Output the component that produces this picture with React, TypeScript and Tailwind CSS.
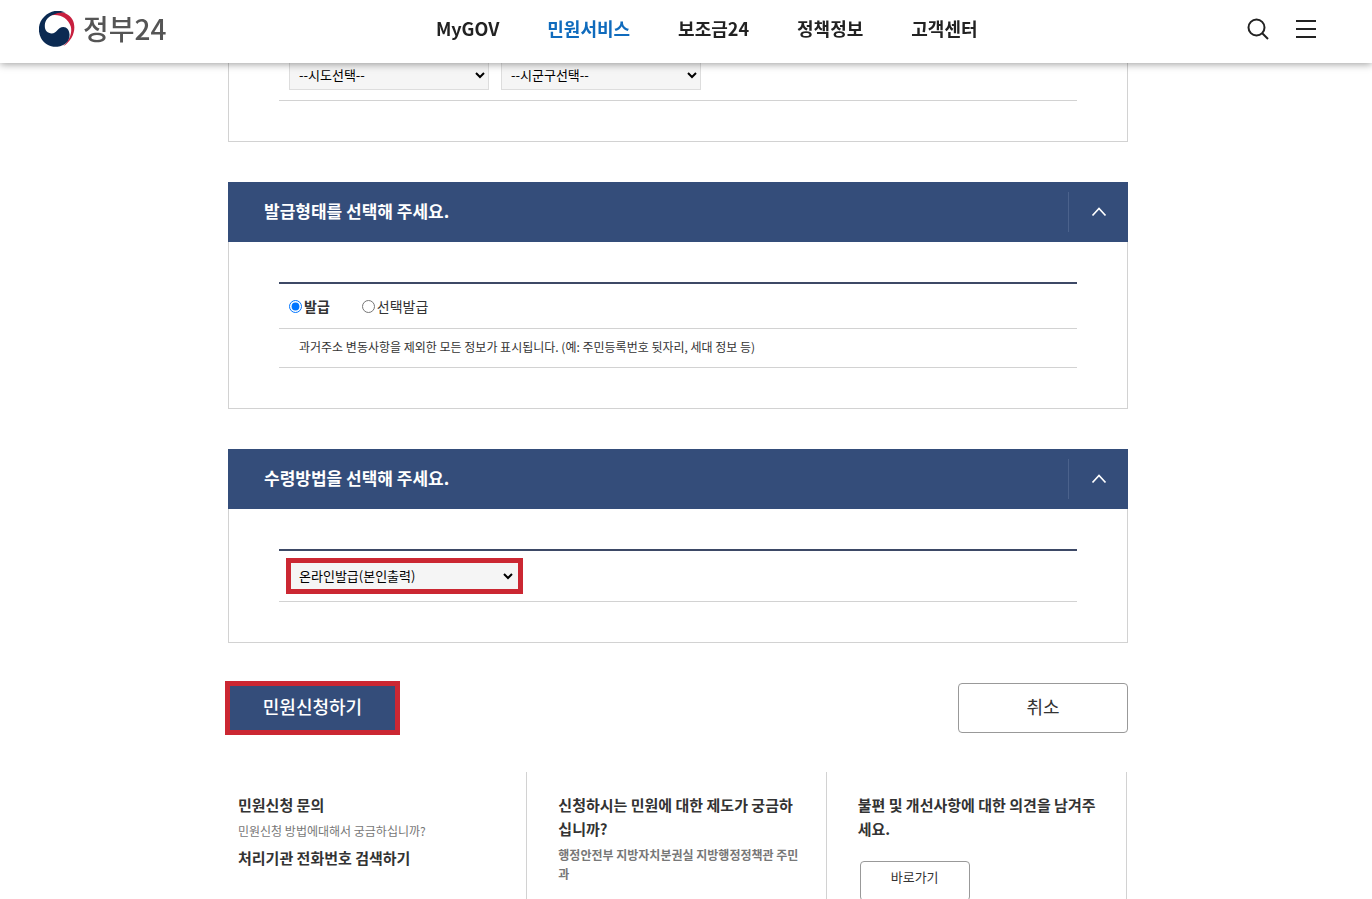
import { useState } from "react";
import type { ReactNode } from "react";

const NAV_ITEMS = ["MyGOV", "민원서비스", "보조금24", "정책정보", "고객센터"];
const ACTIVE_ITEM = "민원서비스";

function Logo() {
  return (
    <a href="#" className="flex items-center gap-2 pb-px text-[28px] leading-10 font-medium text-[#555]">
      <svg viewBox="8 8 111 111" className="size-9" aria-hidden="true">
        <path
          d="M34 24 C58 3 96 8 111 34 C125 60 114 98 82 117 C102 98 111 76 106 56 C97 26 66 13 34 24 Z"
          fill="#c8203f"
        />
        <path
          d="M24 26 C6 42 3 70 14 91 C24 110 44 120 65 118 C90 115 104 98 102 79 C101 66 94 57 83 57 C66 57 63 77 47 77 C35 77 26 69 26 56 C25 38 36 25 54 19 C64 14 76 11 90 14 C74 3 44 4 24 26 Z"
          fill="#0b2a52"
        />
      </svg>
      <span className="pb-[2px]">정부24</span>
    </a>
  );
}

function Header() {
  return (
    <header className="fixed inset-x-0 top-0 z-10 flex h-[63px] items-center justify-between bg-white pr-[55px] pb-[5px] pl-[39px] shadow-[0_1px_8px_rgba(0,0,0,0.4)]">
      <Logo />
      <nav className="flex gap-12 pb-[2px] text-lg font-bold">
        {NAV_ITEMS.map((item) => (
          <a key={item} href="#" className={item === ACTIVE_ITEM ? "text-[#0f6bbd]" : "text-[#222]"}>
            {item}
          </a>
        ))}
      </nav>
      <div className="flex items-center gap-[26px]">
        <button type="button" aria-label="검색">
          <svg viewBox="0 0 22 22" className="size-[22px]" fill="none" stroke="#222" strokeWidth="2">
            <circle cx="9.5" cy="9.5" r="8" />
            <path d="M15 15l6 6" />
          </svg>
        </button>
        <button type="button" aria-label="전체메뉴">
          <svg viewBox="0 0 22 20" className="h-5 w-[22px]" stroke="#222" strokeWidth="2">
            <path d="M1 2h20M1 10h20M1 18h20" />
          </svg>
        </button>
      </div>
    </header>
  );
}

function Section({ title, children }: { title: string; children: ReactNode }) {
  const [open, setOpen] = useState(true);

  return (
    <section className="mt-10">
      <div className="flex h-[60px] items-center justify-between bg-[#344d7a] pl-9">
        <h2 className="pb-[2px] text-[17px] font-bold text-white">{title}</h2>
        <button
          type="button"
          aria-label={title}
          aria-expanded={open}
          onClick={() => setOpen(!open)}
          className="flex h-10 w-[60px] items-center justify-center border-l border-[#4b628c]"
        >
          <svg viewBox="0 0 16 10" className="h-[10px] w-4" fill="none" stroke="#fff" strokeWidth="1.7">
            <path d={open ? "M1.5 8.5l6.5-7 6.5 7" : "M1.5 1.5l6.5 7 6.5-7"} />
          </svg>
        </button>
      </div>
      {open && (
        <div className="border border-t-0 border-[#d2d2d2] px-[50px] py-10">
          <div className="border-t-2 border-[#3d4966]">{children}</div>
        </div>
      )}
    </section>
  );
}

function RegionPanel() {
  const selectClass = "h-[30px] w-[200px] border border-[#ddd] bg-[#f5f5f5] px-[5px] pb-[2px] text-[13px] text-black";

  return (
    <div className="border border-t-0 border-[#d2d2d2] px-[50px] pt-[60px] pb-10">
      <div className="flex gap-3 border-b border-[#d2d2d2] px-[10px] pb-[10px]">
        <select aria-label="시도" className={selectClass}>
          <option>--시도선택--</option>
        </select>
        <select aria-label="시군구" className={selectClass}>
          <option>--시군구선택--</option>
        </select>
      </div>
    </div>
  );
}

function IssueType() {
  const [type, setType] = useState("발급");

  return (
    <>
      <div className="flex h-[45px] items-center gap-8 border-b border-[#d2d2d2] px-[10px] text-sm text-[#333]">
        {["발급", "선택발급"].map((value) => (
          <label key={value} className={value === type ? "flex items-center gap-[2px] font-bold" : "flex items-center gap-[2px]"}>
            <input
              type="radio"
              name="issueType"
              value={value}
              checked={value === type}
              onChange={() => setType(value)}
              className="size-[13px]"
            />
            {value}
          </label>
        ))}
      </div>
      <p className="h-[39px] border-b border-[#d2d2d2] px-5 text-xs leading-9 text-[#333]">
        과거주소 변동사항을 제외한 모든 정보가 표시됩니다. (예: 주민등록번호 뒷자리, 세대 정보 등)
      </p>
    </>
  );
}

function Inquiry() {
  const titleClass = "text-[15px] leading-6 font-bold text-[#333]";

  return (
    <div className="mt-[39px] mr-px grid grid-cols-3 divide-x divide-[#d2d2d2] border-r border-[#d2d2d2]">
      <div className="pt-[21px] pr-6 pb-10 pl-[10px]">
        <h3 className={titleClass}>민원신청 문의</h3>
        <p className="mt-1 text-xs leading-[19px] text-[#777]">민원신청 방법에대해서 궁금하십니까?</p>
        <a href="#" className={`mt-[6px] block ${titleClass}`}>
          처리기관 전화번호 검색하기
        </a>
      </div>
      <div className="pt-[21px] pr-6 pb-10 pl-[31px]">
        <h3 className={titleClass}>신청하시는 민원에 대한 제도가 궁금하십니까?</h3>
        <p className="mt-1 text-xs leading-[19px] font-bold text-[#777]">
          행정안전부 지방자치분권실 지방행정정책관 주민과
        </p>
      </div>
      <div className="pt-[21px] pr-6 pb-10 pl-[31px]">
        <h3 className={titleClass}>불편 및 개선사항에 대한 의견을 남겨주세요.</h3>
        <button
          type="button"
          className="mt-5 ml-[2px] h-10 w-[110px] rounded-sm border border-[#999] pb-2 text-[13px] text-[#333]"
        >
          바로가기
        </button>
      </div>
    </div>
  );
}

export default function App() {
  return (
    <div className="min-h-screen bg-white pr-4 font-['Noto_Sans_CJK_KR',sans-serif]">
      <Header />
      <main className="mx-auto max-w-[900px]">
        <RegionPanel />

        <Section title="발급형태를 선택해 주세요.">
          <IssueType />
        </Section>

        <Section title="수령방법을 선택해 주세요.">
          <div className="border-b border-[#d2d2d2] p-[10px]">
            <select
              aria-label="수령방법"
              className="block h-[30px] w-[231px] border-r-4 border-[#f5f5f5] bg-[#f5f5f5] pb-[2px] pl-[6px] text-[13px] text-black outline-5 -outline-offset-2 outline-[#cb2732]"
            >
              <option>온라인발급(본인출력)</option>
            </select>
          </div>
        </Section>

        <div className="mt-10 flex h-[50px] items-center justify-between text-lg">
          <button
            type="button"
            className="h-12 w-[169px] bg-[#344d7a] pb-1 font-medium text-white outline-5 -outline-offset-2 outline-[#cb2732]"
          >
            민원신청하기
          </button>
          <button type="button" className="h-[50px] w-[170px] rounded-sm border border-[#999] pb-1 text-[#333]">
            취소
          </button>
        </div>

        <Inquiry />
      </main>
    </div>
  );
}
